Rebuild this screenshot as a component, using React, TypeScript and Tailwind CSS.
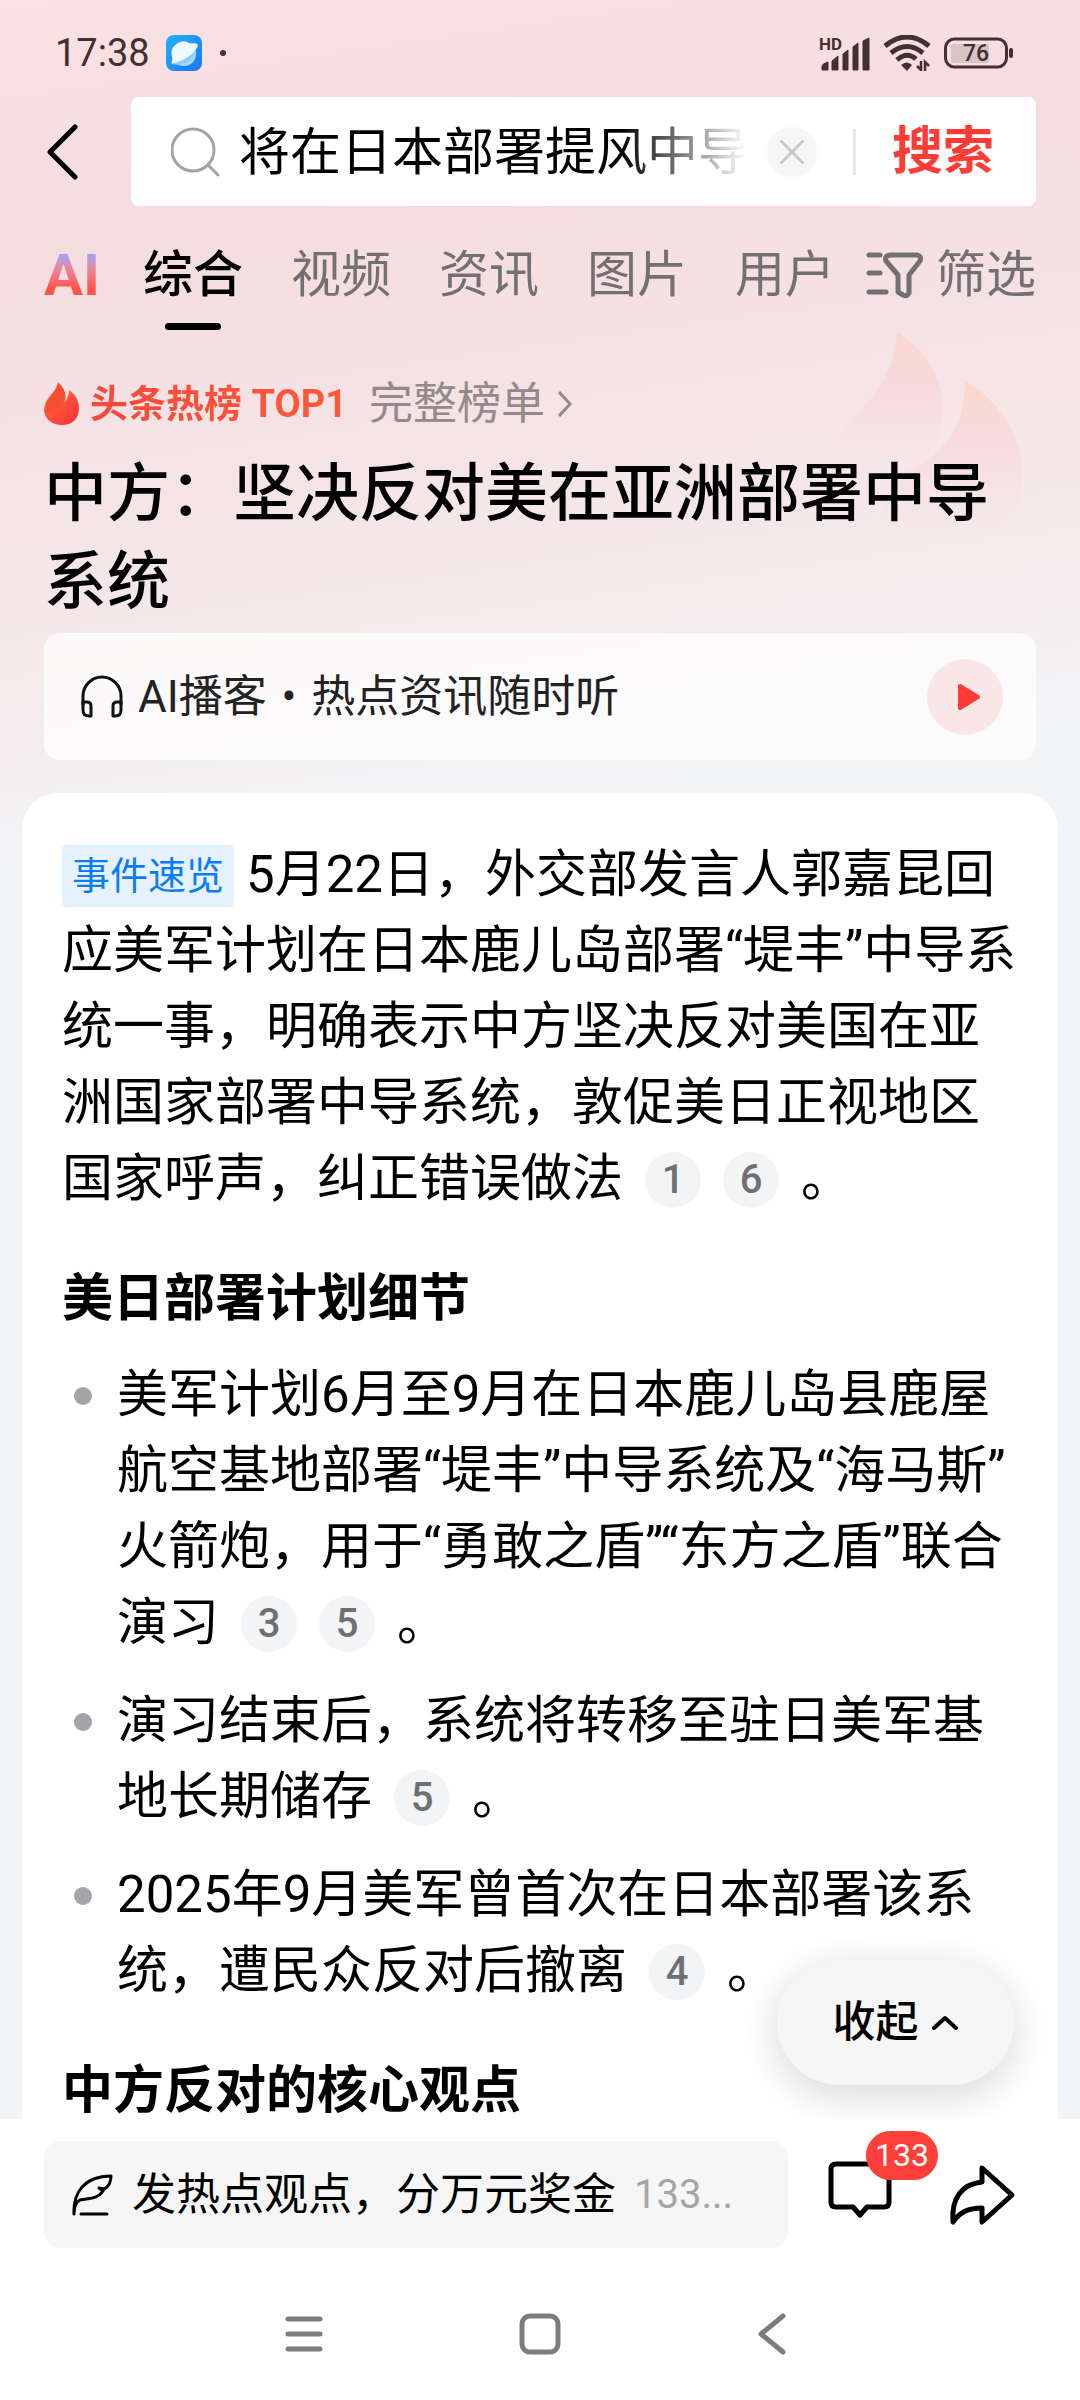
import { useState } from "react";

const FONT = "font-[Roboto,'Noto_Sans_CJK_SC',sans-serif]";

const tabs = ["综合", "视频", "资讯", "图片", "用户"];

// \u200b allows a line break after a closing quote
const points = [
  {
    text: "美军计划6月至9月在日本鹿儿岛县鹿屋航空基地部署“堤丰”中导系统及“海马斯”\u200b火箭炮，用于“勇敢之盾”“东方之盾”\u200b联合演习",
    refs: [3, 5],
  },
  { text: "演习结束后，系统将转移至驻日美军基地长期储存", refs: [5] },
  { text: "2025年9月美军曾首次在日本部署该系统，遭民众反对后撤离", refs: [4] },
];

function StatusBar() {
  return (
    <div className="flex h-[97px] items-center justify-between pt-2 pr-[66px] pl-[55px] text-[#43302f]">
      <div className="flex items-center">
        <span className="text-[38px] leading-none">17:38</span>
        <svg className="ml-4 size-9" viewBox="0 0 36 36">
          <defs>
            <linearGradient id="browser" x1="0" y1="0" x2="1" y2="1">
              <stop offset="0" stopColor="#1fb4f7" />
              <stop offset="1" stopColor="#1b74f8" />
            </linearGradient>
          </defs>
          <rect width="36" height="36" rx="8" fill="url(#browser)" />
          <circle cx="18" cy="19" r="12" fill="#a9dcfd" />
          <path d="M6 22A12 12 0 0 1 24 8.500C28 8 32 8.500 32 10C31 16 22 24 6 29Q5 27 6.500 24Z" fill="#eefaff" />
          <path d="M5 29Q20 27 30 15Q27 25 19 28Q12 31 5 29Z" fill="#8ccbfb" />
        </svg>
        <span className="ml-[18px] size-[6px] rounded-full bg-[#43302f]" />
      </div>
      <div className="flex items-center">
        <svg className="h-9 w-[52px]" viewBox="0 0 52 36" fill="currentColor">
          <text x="0" y="15" fontSize="17" fontWeight="700" fontFamily="Roboto">HD</text>
          <path d="M3 35V31Q3 29 9 27V35ZM13 35V26L19 21V35ZM24 35V19L29 15V35ZM34 35V12L39 8V35ZM44 35V6L50 3V35Z" stroke="currentColor" strokeLinejoin="round" />
        </svg>
        <svg className="ml-3 h-9 w-[48px]" viewBox="0 0 48 36" fill="none" stroke="currentColor" strokeWidth="5">
          <path d="M2 11Q24 -7 46 11" />
          <path d="M8 18Q24 5 40 18" />
          <path d="M14 25Q24 16 33 24" />
          <path d="M18 30Q24 25 29 30L24 36Z" fill="currentColor" stroke="none" />
          <path d="M38 26V35L34 31M42 36V27L46 31" strokeWidth="2.500" />
        </svg>
        <svg className="ml-[13px] h-8 w-[70px]" viewBox="0 0 70 32">
          <rect x="7" y="7" width="38" height="19" rx="3" fill="#d9c3c5" />
          <rect x="1.500" y="2" width="61" height="28" rx="9" fill="none" stroke="currentColor" strokeWidth="3" />
          <rect x="65" y="11" width="4" height="10" rx="2" fill="currentColor" />
          <text x="32" y="24" textAnchor="middle" fontSize="23" fontWeight="500" fontFamily="Roboto" fill="currentColor">76</text>
        </svg>
      </div>
    </div>
  );
}

function SearchRow() {
  return (
    <div className="flex items-center pr-11 pl-11">
      <button aria-label="返回" className="w-[87px]">
        <svg className="h-14 w-9" viewBox="0 0 36 56" fill="none" stroke="#000" strokeWidth="5" strokeLinecap="round" strokeLinejoin="round">
          <path d="M31 3L6 28L31 53" />
        </svg>
      </button>
      <form className="flex h-[109px] min-w-0 flex-1 items-center rounded-lg bg-white pr-[42px] pl-10">
        <svg className="size-[50px] shrink-0" viewBox="0 0 50 50" fill="none" stroke="#a3a3a3" strokeWidth="3" strokeLinecap="round">
          <circle cx="22" cy="23" r="21" />
          <path d="M38 39L47 48" />
        </svg>
        <input
          aria-label="搜索内容"
          defaultValue="将在日本部署提风中导"
          className="ml-[18px] h-20 min-w-0 flex-1 bg-transparent mask-r-from-75% mask-r-to-100% pb-2 text-[51px] text-black outline-none"
        />
        <button type="button" aria-label="清除" className="ml-5 flex size-[50px] items-center justify-center rounded-full bg-[#f6f6f6]">
          <svg className="size-6" viewBox="0 0 24 24" stroke="#c9c9c9" strokeWidth="3" strokeLinecap="round">
            <path d="M1 1L23 23M23 1L1 23" />
          </svg>
        </button>
        <span className="ml-9 h-[46px] w-[3px] bg-[#e8e8e8]" />
        <button type="button" className="ml-[36px] text-[51px] leading-none font-bold text-[#ff3b36]">搜索</button>
      </form>
    </div>
  );
}

function TabRow() {
  const [active, setActive] = useState("综合");
  return (
    <nav className="flex items-start pt-[31px] pr-11 pl-11 whitespace-nowrap">
      <button className="w-[99px] shrink-0 text-left">
        <span className="bg-linear-to-b from-[#9da2f3] from-20% via-[#f17d92] via-45% to-[#fd5348] to-70% bg-clip-text text-[58px] leading-[76px] font-bold text-transparent">
          AI
        </span>
      </button>
      <div className="flex min-w-0 flex-1 items-start gap-12 overflow-hidden">
        {tabs.map((tab) => (
          <button key={tab} onClick={() => setActive(tab)} className="flex shrink-0 flex-col items-center">
            <span className={tab === active ? "text-[50px] leading-[76px] font-medium text-black" : "text-[50px] leading-[76px] text-[#737073]"}>
              {tab}
            </span>
            {tab === active && <span className="mt-[10px] h-[7px] w-14 rounded-full bg-black" />}
          </button>
        ))}
      </div>
      <button className="ml-4 flex shrink-0 items-center text-[50px] leading-[76px] text-[#737073]">
        <svg className="mr-3 h-12 w-[58px]" viewBox="0 0 58 48" fill="none" stroke="currentColor" strokeWidth="5" strokeLinecap="round" strokeLinejoin="round">
          <path d="M3 4H14M3 22H14M3 41H20" />
          <path d="M24 4H51Q56 5 54 10L43 24V42Q41 46 37 44L32 41V24L20 10Q18 5 24 4Z" />
        </svg>
        筛选
      </button>
    </nav>
  );
}

function FlameMark() {
  return (
    <svg className="absolute -top-2 right-14 h-[220px] w-[200px]" viewBox="0 0 200 220">
      <defs>
        <linearGradient id="mark" x1="0" y1="0" x2="0" y2="1">
          <stop offset="0" stopColor="#fad5c4" stopOpacity=".8" />
          <stop offset=".4" stopColor="#f8d2d6" stopOpacity=".6" />
          <stop offset="1" stopColor="#f9dfe2" stopOpacity="0" />
        </linearGradient>
      </defs>
      <path d="M73 10C108 32 122 66 118 100C114 125 100 140 82 150L0 150C10 95 70 80 73 10Z" fill="url(#mark)" />
      <path d="M141 59C180 82 202 122 198 158C196 185 180 205 160 215H70C50 190 60 165 80 150C118 135 142 105 141 59Z" fill="url(#mark)" />
    </svg>
  );
}

function HotTopic() {
  return (
    <header className="relative px-11 pt-9">
      <FlameMark />
      <div className="relative flex h-[76px] items-center">
        <svg className="h-11 w-9" viewBox="0 0 36 44">
          <defs>
            <linearGradient id="flame" x1="0" y1="0" x2="1" y2="1">
              <stop offset="0" stopColor="#ff7138" />
              <stop offset="1" stopColor="#ff2d36" />
            </linearGradient>
          </defs>
          <path d="M25 8C32 13 35 19 35 26C35 37 28 43 18 43C8 43 0 37 0 27C12 28 25 22 25 8Z" fill="url(#flame)" />
          <path d="M14 0C20 6 23 12 21 18C20 25 11 30 1 31C-2 16 12 13 14 0Z" fill="#f5502f" />
        </svg>
        <strong className="ml-[10px] bg-linear-to-r from-[#f5493c] to-[#ff5a38] bg-clip-text text-[38px] font-bold text-transparent">头条热榜 TOP1</strong>
        <a href="#" className="ml-[22px] flex items-center text-[44px] text-[#938a8b]">
          完整榜单
          <svg className="ml-3 h-7 w-4" viewBox="0 0 16 28" fill="none" stroke="currentColor" strokeWidth="3">
            <path d="M2 2L13 14L2 26" />
          </svg>
        </a>
      </div>
      <h1 className="relative mt-2 text-[63px] leading-[88px] font-medium text-black">中方：坚决反对美在亚洲部署中导系统</h1>
    </header>
  );
}

function Podcast() {
  return (
    <section className="mx-11 mt-[7px] flex h-[127px] items-center rounded-2xl bg-white/70 pr-[33px] pl-9 text-[#222]">
      <svg className="size-11" viewBox="0 0 44 44" fill="none" stroke="#111" strokeWidth="3" strokeLinejoin="round">
        <path d="M3 30V21A19 19 0 0 1 41 21V30" />
        <path d="M3 27H7Q11 27 11 31V41H9Q3 41 3 35ZM41 27H37Q33 27 33 31V41H35Q41 41 41 35Z" />
      </svg>
      <p className="ml-[14px] text-[44px]">
        AI播客 <span className="mx-1">•</span> 热点资讯随时听
      </p>
      <button aria-label="播放" className="ml-auto flex size-[76px] items-center justify-center rounded-full bg-[#fae6e7]">
        <svg className="ml-2 h-7 w-6" viewBox="0 0 24 28">
          <path d="M3 3L21 14L3 25Z" fill="#ff3b36" stroke="#ff3b36" strokeWidth="4" strokeLinejoin="round" />
        </svg>
      </button>
    </section>
  );
}

function Refs({ ids }: { ids: number[] }) {
  return (
    <>
      {ids.map((id) => (
        <a key={id} href="#" className="mb-[6px] ml-[22px] inline-flex size-14 items-center justify-center rounded-full bg-[#f3f4f6] align-middle text-[40px] leading-none font-medium text-[#6f7072]">
          {id}
        </a>
      ))}
      <span className="ml-[22px]">。</span>
    </>
  );
}

function Summary() {
  return (
    <article className="mx-[22px] mt-[33px] rounded-t-[36px] bg-white px-10 pt-11 text-[51px] leading-[76px] text-black">
      <p>
        <span className="mr-3 mb-[6px] inline-flex h-[62px] items-center rounded bg-[#e5f1fd] px-[10px] align-middle text-[38px] leading-none text-[#0a7cf5]">
          事件速览
        </span>
        5月22日，外交部发言人郭嘉昆回应美军计划在日本鹿儿岛部署“堤丰”中导系统一事，明确表示中方坚决反对美国在亚洲国家部署中导系统，敦促美日正视地区国家呼声，纠正错误做法
        <Refs ids={[1, 6]} />
      </p>
      <h2 className="mt-11 font-bold">美日部署计划细节</h2>
      <ul className="mt-5 flex flex-col gap-[22px]">
        {points.map((point) => (
          <li key={point.text} className="flex">
            <span className="mt-[30px] mr-[25px] ml-3 size-[18px] shrink-0 rounded-full bg-[#a3a4a7]" />
            <p>
              {point.text}
              <Refs ids={point.refs} />
            </p>
          </li>
        ))}
      </ul>
      <h2 className="mt-11 font-bold">中方反对的核心观点</h2>
    </article>
  );
}

function Footer() {
  return (
    <footer className="shrink-0 bg-white pt-[22px]">
      <div className="flex items-center pr-16 pl-11">
        <button className="flex h-[107px] min-w-0 flex-1 items-center rounded-2xl bg-[#f6f6f6] pl-7 text-[44px] whitespace-nowrap text-black">
          <svg className="h-11 w-[42px] shrink-0" viewBox="0 0 42 44" fill="none" stroke="#000" strokeWidth="3" strokeLinecap="round" strokeLinejoin="round">
            <path d="M2 41C1 20 12 3 39 3C39 8 37 14 32 16L27 15L31 18C25 27 16 25 8 27C4 29 2 34 2 41" />
            <path d="M9 41H35" />
          </svg>
          <span className="ml-[18px]">发热点观点，分万元奖金</span>
          <span className="ml-[18px] text-[40px] text-[#a5a5a5]">133...</span>
        </button>
        <button aria-label="评论" className="relative mb-3 ml-10">
          <svg className="h-[60px] w-16" viewBox="0 0 64 60" fill="none" stroke="#000" strokeWidth="5" strokeLinejoin="round">
            <path d="M8 5H56Q61 5 61 10V43Q61 48 56 48H39L32 56L25 48H8Q3 48 3 43V10Q3 5 8 5Z" />
          </svg>
          <span className="absolute -top-7 left-[38px] flex h-[49px] w-[72px] items-center justify-center rounded-full bg-[#ff3f3a] text-[32px] leading-none text-white">
            133
          </span>
        </button>
        <button aria-label="分享" className="ml-14">
          <svg className="h-[62px] w-[68px]" viewBox="0 0 68 62" fill="none" stroke="#000" strokeWidth="5" strokeLinejoin="round">
            <path d="M34 4L64 31L34 58V44C20 44 12 48 5 58C3 34 14 20 34 18Z" />
          </svg>
        </button>
      </div>
      <div className="flex h-[152px] items-center justify-center gap-[196px] pt-5 pr-2">
        <button aria-label="最近任务">
          <svg className="h-10 w-[38px]" viewBox="0 0 38 40" stroke="#7d7d7d" strokeWidth="5" strokeLinecap="round">
            <path d="M3 5H35M3 20H35M3 35H35" />
          </svg>
        </button>
        <button aria-label="主屏幕">
          <svg className="size-[42px]" viewBox="0 0 42 42" fill="none" stroke="#7d7d7d" strokeWidth="5">
            <rect x="3" y="3" width="36" height="36" rx="8" />
          </svg>
        </button>
        <button aria-label="后退">
          <svg className="h-[42px] w-[30px]" viewBox="0 0 30 42" fill="none" stroke="#7d7d7d" strokeWidth="5" strokeLinecap="round" strokeLinejoin="round">
            <path d="M26 3L4 21L26 39" />
          </svg>
        </button>
      </div>
    </footer>
  );
}

export default function App() {
  return (
    <div className={`flex h-screen flex-col bg-[#f3f4f6] ${FONT}`}>
      <main className="relative min-h-0 flex-1 overflow-hidden bg-[linear-gradient(172deg,#fae1e2_0px,#f5dddf_270px,#f5e3e5_480px,#f5e9eb_660px,#f3f4f6_860px)]">
        <StatusBar />
        <SearchRow />
        <TabRow />
        <HotTopic />
        <Podcast />
        <Summary />
        <button className="absolute right-[66px] bottom-[34px] flex h-[125px] w-[237px] items-center justify-center rounded-full bg-[#f6f6f6] text-[43px] font-medium text-black shadow-[0_10px_40px_rgba(0,0,0,0.16)]">
          收起
          <svg className="ml-3 h-4 w-7" viewBox="0 0 28 16" fill="none" stroke="#000" strokeWidth="4" strokeLinecap="round" strokeLinejoin="round">
            <path d="M3 13L14 3L25 13" />
          </svg>
        </button>
      </main>
      <Footer />
    </div>
  );
}
